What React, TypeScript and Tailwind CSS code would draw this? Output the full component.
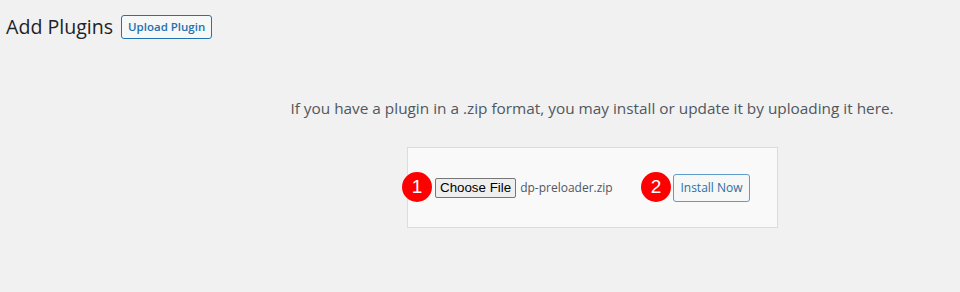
export default function App() {
  return (
    <div
      className="min-h-[292px] w-[960px] bg-[#f1f1f1] text-[#3c434a]"
      style={{ fontFamily: '"Open Sans", "Noto Sans", sans-serif' }}
    >
      <div className="flex items-center pl-[6px] pt-[15px]">
        <h1 className="text-[19.6px] font-normal leading-[24px] text-[#1d2327]">
          Add Plugins
        </h1>
        <button className="ml-[8px] h-[24px] w-[91px] rounded-[3px] border border-[#2271b1] bg-[#f6f7f7] text-[11.5px] font-semibold leading-none text-[#2271b1]">
          Upload Plugin
        </button>
      </div>

      <p className="ml-[272px] mt-[57px] w-[640px] text-center text-[15.35px] leading-[24px] text-[#50575e]">
        If you have a plugin in a .zip format, you may install or update it by uploading it here.
      </p>

      <div className="relative ml-[407px] mt-[27px] flex h-[81px] w-[371px] items-center border border-[#dcdcde] bg-[#f9f9f9] pl-[27px]">
        <div className="flex w-[238px] items-center">
          <span
            className="flex h-[20px] items-center rounded-[2px] border border-[#767676] bg-[#efefef] px-[4px] text-[13.33px] text-black"
            style={{ fontFamily: '"Liberation Sans", Arial, sans-serif' }}
          >
            Choose File
          </span>
          <span className="ml-[4px] text-[12px] text-[#50575e]">dp-preloader.zip</span>
        </div>
        <button className="h-[28px] w-[77px] rounded-[3px] border border-[#5f9ccc] bg-[#f6f7f7] text-[12px] text-[#2f6f9f]">
          Install Now
        </button>

        <span
          className="absolute left-[-6px] top-[24px] flex h-[30px] w-[30px] items-center justify-center rounded-full bg-[#ff0000] text-[19px] text-white"
          style={{ fontFamily: '"Liberation Sans", Arial, sans-serif' }}
        >
          1
        </span>
        <span
          className="absolute left-[233px] top-[24px] flex h-[30px] w-[30px] items-center justify-center rounded-full bg-[#ff0000] text-[19px] text-white"
          style={{ fontFamily: '"Liberation Sans", Arial, sans-serif' }}
        >
          2
        </span>
      </div>
    </div>
  );
}
